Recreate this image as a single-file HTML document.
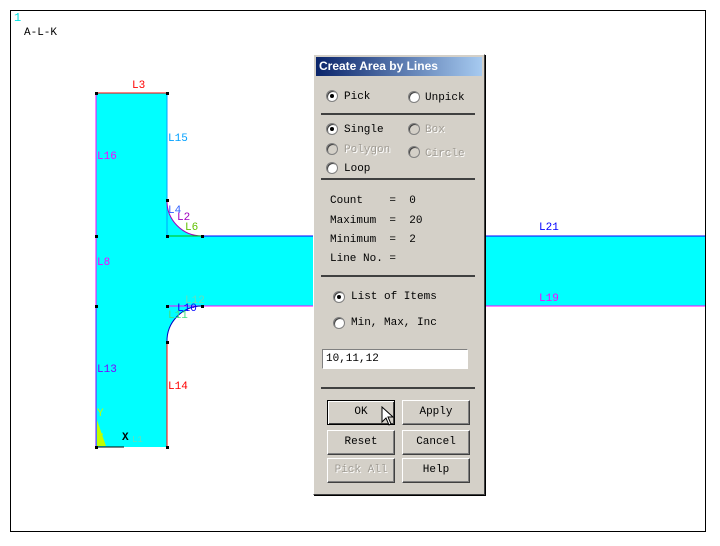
<!DOCTYPE html>
<html><head><meta charset="utf-8"><style>
*{margin:0;padding:0;box-sizing:border-box}
body{width:720px;height:546px;background:#fff;position:relative;overflow:hidden;font-family:"Liberation Mono",monospace;}
.t{position:absolute;font-family:"Liberation Mono",monospace;font-size:11px;line-height:12px;white-space:pre}
#dlg{position:absolute;left:313px;top:54px;width:172px;height:441px;background:#d4d0c8;border:1px solid;border-color:#fff #404040 #404040 #fff;box-shadow:1px 1px 0 #000}
#tt{position:absolute;left:2px;top:2px;width:166px;height:19px;background:linear-gradient(to right,#0a246a,#a6caf0);color:#fff;font:bold 12px "Liberation Sans",sans-serif;line-height:19px;padding-left:3px}
.sep{position:absolute;left:7px;width:154px;height:2px;background:#404040}
.r{position:absolute;width:12px;height:12px;border-radius:50%;background:#fff;border:1px solid #808080;box-shadow:inset 1px 1px 0 #404040}
.r.on::after{content:"";position:absolute;left:3px;top:3px;width:4px;height:4px;border-radius:50%;background:#000}
.r.dis{background:#d4d0c8}
.d .t,.t.g{color:#a09c94;text-shadow:1px 1px 0 #fff}
.btn{position:absolute;width:68px;height:25px;background:#d4d0c8;border:1px solid;border-color:#fff #404040 #404040 #fff;box-shadow:inset -1px -1px 0 #808080;text-align:center;line-height:22px;font-size:11px}
</style></head><body>
<div style="position:absolute;left:10px;top:10px;width:696px;height:522px;border:1px solid #000"></div>
<div class="t" style="left:14px;top:12px;color:#00e0e0;font-size:12px">1</div>
<div class="t" style="left:24px;top:27px;color:#000">A-L-K</div>
<svg style="position:absolute;left:0;top:0" width="720" height="546">
<path d="M96 93 H167 V200 A35 35 0 0 0 202 236 H705 V306 H202 A35 35 0 0 0 167 342 V447 H96 Z" fill="#00ffff"/>
<line x1="96" y1="93" x2="167" y2="93" stroke="#ff0000"/>
<line x1="96" y1="93" x2="96" y2="447" stroke="#ff00ff"/>
<line x1="96" y1="306" x2="96" y2="447" stroke="#8000ff"/>
<line x1="167" y1="93" x2="167" y2="236" stroke="#00a0ff"/>
<line x1="167" y1="342" x2="167" y2="447" stroke="#ff0000"/>
<line x1="167" y1="236" x2="705" y2="236" stroke="#0000ff"/>
<line x1="167" y1="306" x2="705" y2="306" stroke="#ff00ff"/>
<path d="M167 200 A35 35 0 0 0 202 236" fill="none" stroke="#a000c0"/>
<path d="M167 342 A35 35 0 0 1 202 306" fill="none" stroke="#0000c0"/>
<line x1="167" y1="236" x2="202" y2="236" stroke="#00c000"/>
<line x1="98" y1="447" x2="124" y2="447" stroke="#000"/>
<path d="M97 420 L97 446 L106 446 Z" fill="#c0ff00"/>
<g fill="#000"><rect x="95" y="92" width="3" height="3"/><rect x="166" y="92" width="3" height="3"/><rect x="95" y="235" width="3" height="3"/><rect x="95" y="305" width="3" height="3"/><rect x="166" y="199" width="3" height="3"/><rect x="166" y="235" width="3" height="3"/><rect x="201" y="235" width="3" height="3"/><rect x="166" y="305" width="3" height="3"/><rect x="201" y="305" width="3" height="3"/><rect x="166" y="341" width="3" height="3"/><rect x="95" y="446" width="3" height="3"/><rect x="166" y="446" width="3" height="3"/></g>
</svg>
<div class="t" style="left:132px;top:80px;color:#ff0000">L3</div>
<div class="t" style="left:168px;top:133px;color:#00a0ff">L15</div>
<div class="t" style="left:97px;top:151px;color:#ff00ff">L16</div>
<div class="t" style="left:168px;top:205px;color:#3060ff">L4</div>
<div class="t" style="left:177px;top:212px;color:#a000c0">L2</div>
<div class="t" style="left:185px;top:222px;color:#60c000">L6</div>
<div class="t" style="left:97px;top:257px;color:#ff00ff">L8</div>
<div class="t" style="left:185px;top:295px;color:#60e0c0">L12</div>
<div class="t" style="left:177px;top:303px;color:#0000ff">L10</div>
<div class="t" style="left:168px;top:310px;color:#40e080">L11</div>
<div class="t" style="left:97px;top:364px;color:#8000ff">L13</div>
<div class="t" style="left:168px;top:381px;color:#ff0000">L14</div>
<div class="t" style="left:97px;top:408px;color:#c0ff00">Y</div>
<div class="t" style="left:97px;top:433px;color:#c0ff00">Z</div>
<div class="t" style="left:122px;top:432px;color:#000;font-weight:bold">X</div>
<div class="t" style="left:132px;top:434px;color:#60e0c0;font-size:9px">L1</div>
<div class="t" style="left:539px;top:222px;color:#0000ff">L21</div>
<div class="t" style="left:539px;top:293px;color:#ff00ff">L19</div>

<div id="dlg">
<div id="tt">Create Area by Lines</div>
<div class="r on" style="left:12px;top:35px"></div><div class="t" style="left:30px;top:36px">Pick</div>
<div class="r" style="left:94px;top:36px"></div><div class="t" style="left:111px;top:37px">Unpick</div>
<div class="sep" style="top:58px"></div>
<div class="r on" style="left:12px;top:68px"></div><div class="t" style="left:30px;top:69px">Single</div>
<div class="r dis" style="left:94px;top:68px"></div><div class="t g" style="left:111px;top:69px">Box</div>
<div class="r dis" style="left:12px;top:88px"></div><div class="t g" style="left:30px;top:89px">Polygon</div>
<div class="r dis" style="left:94px;top:91px"></div><div class="t g" style="left:111px;top:93px">Circle</div>
<div class="r" style="left:12px;top:107px"></div><div class="t" style="left:30px;top:108px">Loop</div>
<div class="sep" style="top:123px"></div>
<div class="t" style="left:16px;top:140px">Count    =  0</div>
<div class="t" style="left:16px;top:160px">Maximum  =  20</div>
<div class="t" style="left:16px;top:179px">Minimum  =  2</div>
<div class="t" style="left:16px;top:198px">Line No. =</div>
<div class="sep" style="top:220px"></div>
<div class="r on" style="left:19px;top:236px"></div><div class="t" style="left:37px;top:236px">List of Items</div>
<div class="r" style="left:19px;top:262px"></div><div class="t" style="left:37px;top:262px">Min, Max, Inc</div>
<div style="position:absolute;left:8px;top:294px;width:146px;height:20px;background:#fff;border:1px solid;border-color:#808080 #fff #fff #808080"></div>
<div class="t" style="left:12px;top:298px">10,11,12</div>
<div class="sep" style="top:332px"></div>
<div class="btn" style="left:13px;top:345px;border:1px solid #000;box-shadow:inset 1px 1px 0 #fff,inset -1px -1px 0 #404040">OK</div>
<div class="btn" style="left:88px;top:345px">Apply</div>
<div class="btn" style="left:13px;top:375px">Reset</div>
<div class="btn" style="left:88px;top:375px">Cancel</div>
<div class="btn" style="left:13px;top:403px;color:#a09c94;text-shadow:1px 1px 0 #fff">Pick All</div>
<div class="btn" style="left:88px;top:403px">Help</div>
<svg style="position:absolute;left:67px;top:351px" width="14" height="22"><path d="M1 1 L1 16 L5 12 L8 19 L10 18 L7 11 L12 11 Z" fill="#fff" stroke="#000"/></svg>
</div>
</body></html>
